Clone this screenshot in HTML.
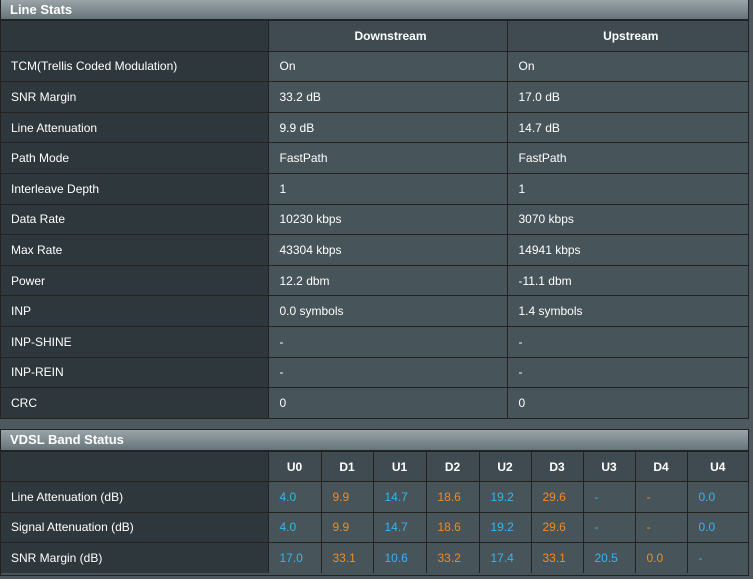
<!DOCTYPE html>
<html><head><meta charset="utf-8"><style>
html,body{margin:0;padding:0;width:753px;height:579px;overflow:hidden;background:#4d595e;font-family:"Liberation Sans",Arial,sans-serif;font-size:12px;color:#fff}
.box{position:absolute;left:0;width:747px;border:1px solid #222;border-top:none;background:#475459}
.bar{height:20px;background:linear-gradient(#9aa4a8,#66747a);font-weight:bold;font-size:13px;line-height:20px;padding-left:9px;color:#fff;border-bottom:1px solid #222;box-sizing:border-box}
table{border-collapse:collapse;table-layout:fixed;width:747px}
td,th{border:1px solid #222;padding:0;overflow:hidden;white-space:nowrap}
tr>*:first-child{border-left:none}
tr>*:last-child{border-right:none}
tr:last-child>*{border-bottom:none}
th{background:#3f4b51;font-weight:bold;text-align:center}
td.l,th.l{background:#2e373c;text-align:left;padding-left:10px}
td{padding-left:11px;background:#475459}
.t1 tr{height:30.6px}
.t2 tr{height:30.4px}
.b{color:#35b5ef}.o{color:#f58a1f}
</style></head><body>
<div class="box" style="top:0;height:418px">
<div class="bar">Line Stats</div>
<table class="t1">
<colgroup><col style="width:267px"><col style="width:239px"><col></colgroup>
<tr><th class="l"></th><th style="padding-left:6px">Downstream</th><th style="padding-left:6px">Upstream</th></tr>
<tr><td class="l">TCM(Trellis Coded Modulation)</td><td>On</td><td>On</td></tr>
<tr><td class="l">SNR Margin</td><td>33.2 dB</td><td>17.0 dB</td></tr>
<tr><td class="l">Line Attenuation</td><td>9.9 dB</td><td>14.7 dB</td></tr>
<tr><td class="l">Path Mode</td><td>FastPath</td><td>FastPath</td></tr>
<tr><td class="l">Interleave Depth</td><td>1</td><td>1</td></tr>
<tr><td class="l">Data Rate</td><td>10230 kbps</td><td>3070 kbps</td></tr>
<tr><td class="l">Max Rate</td><td>43304 kbps</td><td>14941 kbps</td></tr>
<tr><td class="l">Power</td><td>12.2 dbm</td><td>-11.1 dbm</td></tr>
<tr><td class="l">INP</td><td>0.0 symbols</td><td>1.4 symbols</td></tr>
<tr><td class="l">INP-SHINE</td><td>-</td><td>-</td></tr>
<tr><td class="l">INP-REIN</td><td>-</td><td>-</td></tr>
<tr><td class="l">CRC</td><td>0</td><td>0</td></tr>
</table></div>
<div class="box" style="top:429px;height:145px;border-top:1px solid #222">
<div class="bar" style="height:21px;line-height:20px">VDSL Band Status</div>
<table class="t2">
<colgroup><col style="width:267px"><col style="width:53px"><col style="width:52px"><col style="width:53px"><col style="width:53px"><col style="width:52px"><col style="width:52px"><col style="width:52px"><col style="width:52px"><col></colgroup>
<tr><th class="l"></th><th>U0</th><th>D1</th><th>U1</th><th>D2</th><th>U2</th><th>D3</th><th>U3</th><th>D4</th><th>U4</th></tr>
<tr><td class="l">Line Attenuation (dB)</td><td class="b">4.0</td><td class="o">9.9</td><td class="b">14.7</td><td class="o">18.6</td><td class="b">19.2</td><td class="o">29.6</td><td class="b">-</td><td class="o">-</td><td class="b">0.0</td></tr>
<tr><td class="l">Signal Attenuation (dB)</td><td class="b">4.0</td><td class="o">9.9</td><td class="b">14.7</td><td class="o">18.6</td><td class="b">19.2</td><td class="o">29.6</td><td class="b">-</td><td class="o">-</td><td class="b">0.0</td></tr>
<tr><td class="l">SNR Margin (dB)</td><td class="b">17.0</td><td class="o">33.1</td><td class="b">10.6</td><td class="o">33.2</td><td class="b">17.4</td><td class="o">33.1</td><td class="b">20.5</td><td class="o">0.0</td><td class="b">-</td></tr>
</table></div>
</body></html>
